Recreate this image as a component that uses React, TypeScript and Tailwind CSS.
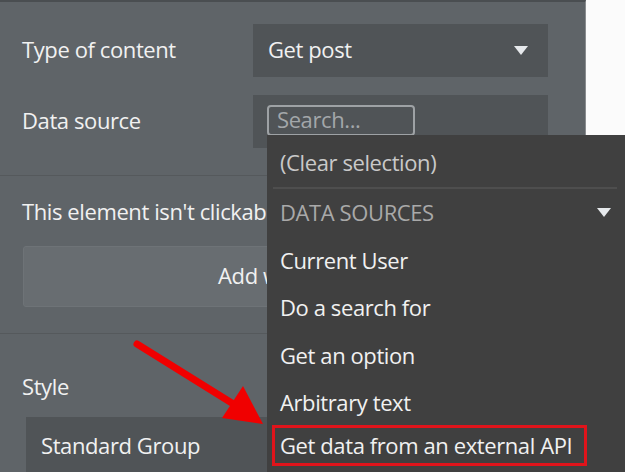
import React from "react";

const items = ["Current User", "Do a search for", "Get an option", "Arbitrary text"];

function Caret({ className = "" }: { className?: string }) {
  return (
    <svg width="14" height="9" viewBox="0 0 14 9" className={className}>
      <path d="M0 0 L14 0 L7 9 Z" fill="#e6e9ec" />
    </svg>
  );
}

export default function App() {
  return (
    <div
      className="relative w-[625px] h-[472px] overflow-hidden flex bg-white text-[22px] text-[#f1f1f1] tracking-[-0.4px]"
      style={{ fontFamily: '"Open Sans", "Noto Sans", sans-serif' }}
    >
      <div className="w-[586px] shrink-0 bg-[#5f6468] border-t-2 border-[#4a4e51] border-r border-r-[#8a8d90] pl-[22px] pt-[22px]">
        <div className="flex items-center h-[53px]">
          <div className="w-[231px] pb-[2px]">Type of content</div>
          <div className="w-[295px] h-full bg-[#505457] flex items-center justify-between pl-[15px] pr-[20px]">
            <span className="pb-[2px]">Get post</span>
            <Caret />
          </div>
        </div>
        <div className="flex items-center h-[53px] mt-[18px]">
          <div className="w-[231px] pb-[2px]">Data source</div>
          <div className="w-[295px] h-full bg-[#505457] pl-[14px] pt-[10px]">
            <div className="w-[148px] h-[31px] border-2 border-[#9ea2a5] rounded-[4px] px-[8px] leading-[25px] text-[#a3a7aa]">
              Search...
            </div>
          </div>
        </div>
        <div className="h-px bg-[#55595c] -ml-[22px] mt-[27px]" />
        <div className="mt-[22px] leading-[27px]">This element isn't clickable</div>
        <div className="mt-[21px] w-[526px] h-[61px] ml-px bg-[#686d71] rounded-[3px] border border-[#6e7377] flex items-center justify-center pb-[2px]">
          Add workflow
        </div>
        <div className="h-px bg-[#55595c] -ml-[22px] mt-[26px]" />
        <div className="mt-[39px] leading-[27px]">Style</div>
        <div className="mt-[17px] ml-[4px] w-[522px] h-[60px] bg-[#505457] flex items-center pl-[15px] pb-[4px]">
          Standard Group
        </div>
      </div>
      <div className="flex-1 bg-[#fbfbfb]" />

      {/* dropdown */}
      <div className="absolute left-[267px] top-[135px] w-[370px] h-[350px] bg-[#404040] pt-[13px]">
        <div className="pl-[13px] h-[28px] leading-[28px] text-[#c9c9c9]">(Clear selection)</div>
        <div className="h-[2px] bg-[#4e4e4e] ml-[6px] w-[344px] mt-[11px]" />
        <div className="flex items-center justify-between pl-[13px] pr-[26px] h-[28px] mt-[9px] text-[#a9a9a9]">
          <span>DATA SOURCES</span>
          <Caret />
        </div>
        {items.map((t) => (
          <div key={t} className="pl-[13px] h-[28px] leading-[28px] mt-[19.5px]">
            {t}
          </div>
        ))}
        <div className="ml-[5px] w-[315px] h-[41px] mt-[9px] border-[3px] border-[#e0141b] pl-[5px] leading-[34px]">
          Get data from an external API
        </div>
      </div>

      {/* arrow */}
      <svg className="absolute left-0 top-0" width="625" height="472" viewBox="0 0 625 472">
        <line x1="137" y1="344" x2="235" y2="405" stroke="#f00000" strokeWidth="7" strokeLinecap="round" />
        <path d="M263 424 L222 418 L243 386 Z" fill="#f00000" />
      </svg>
    </div>
  );
}
